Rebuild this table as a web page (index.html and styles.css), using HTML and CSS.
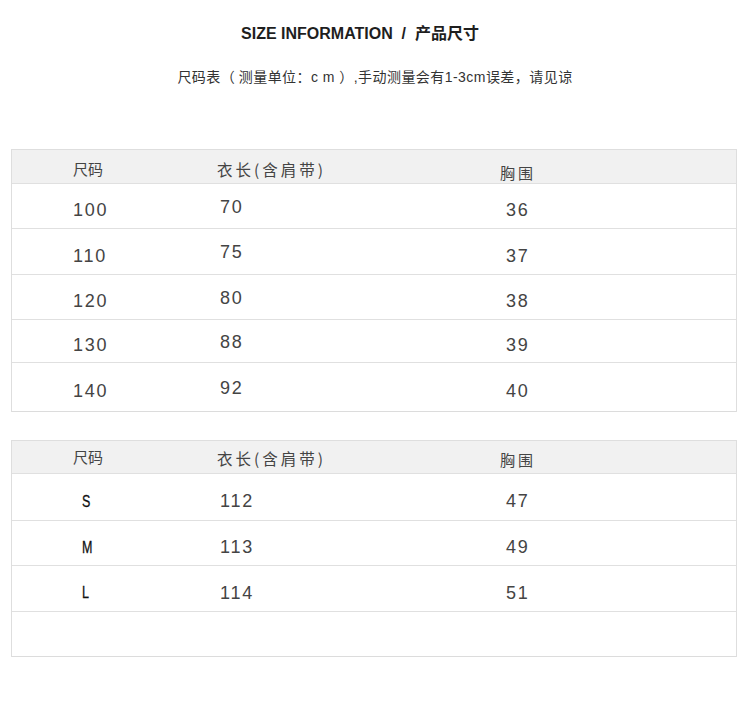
FILE: index.html
```html
<!DOCTYPE html>
<html lang="zh-CN">
<head>
<meta charset="utf-8">
<title>SIZE INFORMATION</title>
<link rel="stylesheet" href="styles.css">
</head>
<body>
<div class="page">
  <h1 class="title">SIZE INFORMATION&nbsp; /&nbsp; 产品尺寸</h1>
  <p class="note">尺码表（ 测量单位：<span class="lat">c m </span>）<span class="lat">,</span>手动测量会有<span class="lat">1-3cm</span>误差，请见谅</p>

  <div class="table t1">
    <div class="row head"><span class="c1">尺码</span><span class="c2">衣长(含肩带)</span><span class="c3">胸围</span></div>
    <div class="row h45"><span class="c1 num">100</span><span class="c2 num up">70</span><span class="c3 num">36</span></div>
    <div class="row h46"><span class="c1 num">110</span><span class="c2 num up">75</span><span class="c3 num">37</span></div>
    <div class="row h45"><span class="c1 num">120</span><span class="c2 num up">80</span><span class="c3 num">38</span></div>
    <div class="row h43"><span class="c1 num">130</span><span class="c2 num up">88</span><span class="c3 num">39</span></div>
    <div class="row h49 last"><span class="c1 num">140</span><span class="c2 num up">92</span><span class="c3 num">40</span></div>
  </div>

  <div class="table t2">
    <div class="row head"><span class="c1">尺码</span><span class="c2">衣长(含肩带)</span><span class="c3">胸围</span></div>
    <div class="row h47"><span class="c1"><span class="letter">S</span></span><span class="c2 num">112</span><span class="c3 num">47</span></div>
    <div class="row h45"><span class="c1"><span class="letter">M</span></span><span class="c2 num">113</span><span class="c3 num">49</span></div>
    <div class="row h46"><span class="c1"><span class="letter">L</span></span><span class="c2 num">114</span><span class="c3 num">51</span></div>
    <div class="row h45 last"><span class="c1"></span><span class="c2"></span><span class="c3"></span></div>
  </div>
</div>
</body>
</html>
```
FILE: styles.css
```css
html, body {
  margin: 0;
  padding: 0;
  background: #ffffff;
}
body {
  font-family: "Liberation Sans", "Noto Sans CJK SC", sans-serif;
  color: #333;
}
.page {
  width: 750px;
  height: 710px;
  padding-top: 24px;
  box-sizing: border-box;
}
.title {
  margin: 0;
  text-align: center;
  font-size: 16px;
  font-weight: bold;
  line-height: 20px;
  color: #1e1e1e;
  letter-spacing: 0;
  padding-right: 30px;
}
.note {
  margin: 23px 0 0;
  text-align: center;
  font-family: "Noto Sans CJK JP", "Noto Sans CJK SC", sans-serif;
  font-size: 14px;
  line-height: 18px;
  letter-spacing: 0.45px;
  color: #333;
}
.note .lat {
  font-family: "Liberation Sans", sans-serif;
}
.table {
  margin-left: 11px;
  width: 726px;
  border: 1px solid #dedede;
  border-bottom: none;
  box-sizing: border-box;
}
.t1 { margin-top: 63px; }
.t2 { margin-top: 28px; }
.row {
  display: grid;
  grid-template-columns: 144px 283px 1fr;
  padding-left: 61px;
  padding-top: 9px;
  align-items: center;
  border-bottom: 1px solid #e0e0e0;
  box-sizing: border-box;
}
.row.head {
  height: 34px;
  padding-top: 5px;
  background: #f1f1f1;
  font-family: "Noto Sans CJK SC", sans-serif;
  font-size: 15px;
  color: #444;
}
.head .c2 { letter-spacing: 3px; font-size: 15.5px; }
.head .c3 { letter-spacing: 3px; }
.t2 .row.head { height: 33px; padding-top: 1px; }
.head .c1 { margin-top: -2px; }
.head .c3 { margin-top: 6px; }
.t2 .head .c3 { margin-top: 4px; }
.h43 { height: 43px; }
.h45 { height: 45px; }
.h46 { height: 46px; }
.h47 { height: 47px; }
.h49 { height: 49px; }
.row.last { border-bottom: 1px solid #dcdcdc; }
.num {
  font-family: "Liberation Sans", sans-serif;
  font-size: 18px;
  letter-spacing: 1.8px;
  color: #444;
}
.row .c2.num { padding-left: 3px; }
.row .c3.num { padding-left: 6px; }
.row .c2.up { margin-bottom: 7px; }
.letter {
  display: inline-block;
  margin-left: 9px;
  font-family: "Liberation Sans", sans-serif;
  font-size: 16px;
  font-weight: normal;
  color: #111;
  transform: scaleX(0.78);
  transform-origin: left center;
  -webkit-text-stroke: 0.3px #111;
}
```
